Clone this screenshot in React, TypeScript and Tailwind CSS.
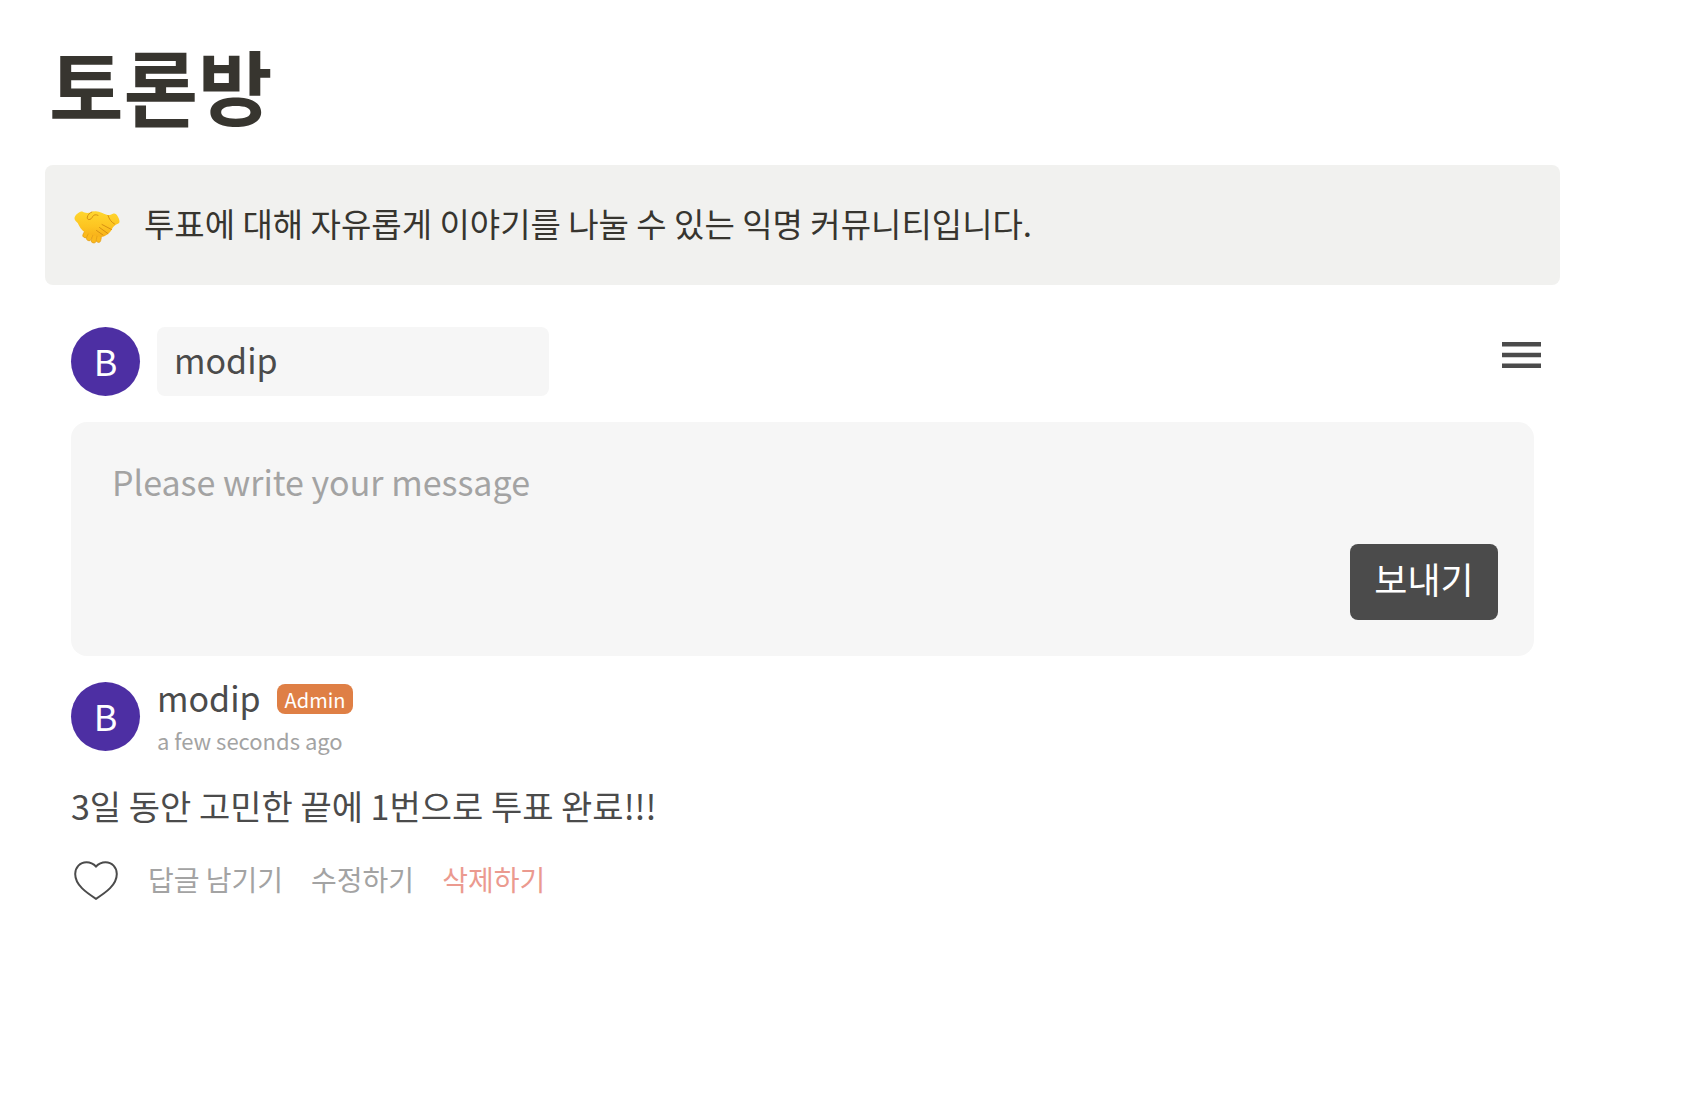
import React, { useState } from 'react';

function Avatar({ letter }: { letter: string }) {
  return (
    <div className="flex size-[69px] shrink-0 items-center justify-center rounded-full bg-[#4d2fa3] pb-1 text-4xl leading-10 text-white">
      {letter}
    </div>
  );
}

function Handshake() {
  return (
    <svg viewBox="0 0 46 34" className="mt-1 h-[34px] w-[46px] shrink-0" aria-hidden="true">
      <defs>
        <linearGradient id="skin" x1="0" y1="0" x2="0" y2="1">
          <stop offset="0" stopColor="#ffd62e" />
          <stop offset="0.6" stopColor="#fdc421" />
          <stop offset="1" stopColor="#f7b01a" />
        </linearGradient>
      </defs>
      {/* fingers under the grip */}
      <g fill="#fbb91c" stroke="#e09a14" strokeWidth="0.6">
        <rect x="9.500" y="20" width="5" height="8" rx="2.500" transform="rotate(28 12 24)" />
        <rect x="13.500" y="22" width="5" height="9" rx="2.500" transform="rotate(24 16 26)" />
        <rect x="18" y="24" width="5" height="9" rx="2.500" transform="rotate(18 20 28)" />
        <rect x="22.500" y="25" width="4.500" height="7.500" rx="2.200" transform="rotate(12 25 29)" />
      </g>
      <path
        fill="url(#skin)"
        d="M.5 8.500C.5 6 3.500 2.800 6.500 1.700c1.500-.5 2.500.3 4 .8 2 .6 4 .5 6-.1 1.500-.6 2.800-1.200 4.200-1 4.500-.6 8.500 2.600 12.800 3.600 2.300.5 4.300-.8 6-1.500 1.500-.4 2.500.3 3.500 1.800 1.500 2.300 2.700 4.700 2.500 6.700-.2 1.500-2.500 2-4 3-2 1.200-2.700 2.500-3.700 4.500-1.300 2.500-3.300 4.500-5.800 5.800-2.500 1.700-5.500 2.200-8 .7L20 25.500 11 22.500C7.500 20.500 5.200 16 3.700 13 2.500 11.500.5 10.500.5 8.500Z"
      />
      <g fill="none" stroke="#d08a12" strokeWidth="0.900" strokeLinecap="round" strokeLinejoin="round">
        <path d="M24 5.300c-2.500-1-4-.6-5 .8-.9 1.200-1.300 2.600-3 3.300-1.700.7-3.100-.5-2.700-2.300.5-2.200 2.200-4.100 4.500-5.100" />
        <path d="M34 5.500c1.200 3.500 3 6.500 6.500 8.500" />
        <path d="m28 14.500 9.500 5M25.500 17.500l8.300 6M22.500 20.500l6.500 4.500" />
      </g>
    </svg>
  );
}

function App() {
  const [name, setName] = useState('modip');
  const [message, setMessage] = useState('');
  const [liked, setLiked] = useState(false);

  return (
    <main className="min-h-screen bg-white pt-8 pr-32 pl-[45px] font-['Noto_Sans_CJK_KR',sans-serif] text-[#4b4b4b]">
      <h1 className="px-1 text-[81px] leading-26 font-bold text-[#37352f]">토론방</h1>

      {/* Callout */}
      <section className="mt-[29px] flex h-[120px] items-center gap-6 rounded-lg bg-[#f1f1ef] pr-7 pl-[29px]">
        <Handshake />
        <p className="pb-1 text-[33px] leading-12 text-[#37352f]">
          투표에 대해 자유롭게 이야기를 나눌 수 있는 익명 커뮤니티입니다.
        </p>
      </section>

      <div className="mt-[42px] pr-[26px] pl-[26px]">
        {/* Writer */}
        <div className="flex items-start">
          <Avatar letter="B" />
          <input
            type="text"
            aria-label="Name"
            value={name}
            onChange={(e) => setName(e.target.value)}
            className="ml-[17px] h-[69px] w-[392px] rounded-lg bg-[#f6f6f6] px-[17px] pb-1 text-[34px] leading-10 outline-none"
          />
          <button type="button" aria-label="Menu" className="-mr-[7px] ml-auto pt-[15px]">
            <svg viewBox="0 0 39 26" className="h-[26px] w-[39px]" fill="#4b4b4b">
              <path d="M0 0h39v4.500H0zM0 10.800h39v4.500H0zM0 21.500h39v4.500H0z" />
            </svg>
          </button>
        </div>

        {/* Message box */}
        <form
          onSubmit={(e) => e.preventDefault()}
          className="mt-[26px] flex h-[234px] items-end rounded-2xl bg-[#f6f6f6] pr-9 pb-9"
        >
          <textarea
            aria-label="Message"
            value={message}
            onChange={(e) => setMessage(e.target.value)}
            placeholder="Please write your message"
            className="-mb-9 h-[234px] flex-1 resize-none px-[41px] pt-9 text-[34px] leading-12 outline-none placeholder:text-[#a3a3a3]"
          />
          <button type="submit" className="h-[76px] w-[148px] rounded-lg bg-[#4b4b4b] pb-2 text-4xl leading-10 text-white">
            보내기
          </button>
        </form>

        {/* Comment */}
        <article className="mt-[26px]">
          <div className="flex items-start gap-[17px]">
            <Avatar letter="B" />
            <div>
              <div className="flex items-start gap-4">
                <span className="text-[34px] leading-8">modip</span>
                <span className="mt-[2px] flex h-[30px] items-center rounded-lg bg-[#df7f45] px-2 pt-[2px] text-xl leading-7 text-white">Admin</span>
              </div>
              <p className="mt-3 text-[22px] leading-7 text-[#a3a3a3]">a few seconds ago</p>
            </div>
          </div>
          <p className="mt-[26px] text-[34px] leading-13">3일 동안 고민한 끝에 1번으로 투표 완료!!!</p>
          <div className="mt-[25px] flex items-center text-[28px] leading-10 text-[#a3a3a3]">
            <button
              type="button"
              aria-label="Like"
              aria-pressed={liked}
              onClick={() => setLiked(!liked)}
              className="ml-[3px] pt-1"
            >
              <svg viewBox="0 0 44 39" className="h-[39px] w-11" fill={liked ? '#e8968a' : 'none'} stroke="#4b4b4b" strokeWidth="2">
                <path d="M22 5.500C19.500 2.800 16 1.200 12.500 1.200 6 1.200 1.200 6.300 1.200 13c0 11 11 18.500 20.800 24.800C31.800 31.500 42.800 24 42.800 13c0-6.700-4.800-11.800-11.300-11.800-3.500 0-7 1.600-9.500 4.300Z" />
              </svg>
            </button>
            <button type="button" className="ml-[30px]">답글 남기기</button>
            <button type="button" className="ml-7">수정하기</button>
            <button type="button" className="ml-7 text-[#eb9a8f]">삭제하기</button>
          </div>
        </article>
      </div>
    </main>
  );
}

export default App;
